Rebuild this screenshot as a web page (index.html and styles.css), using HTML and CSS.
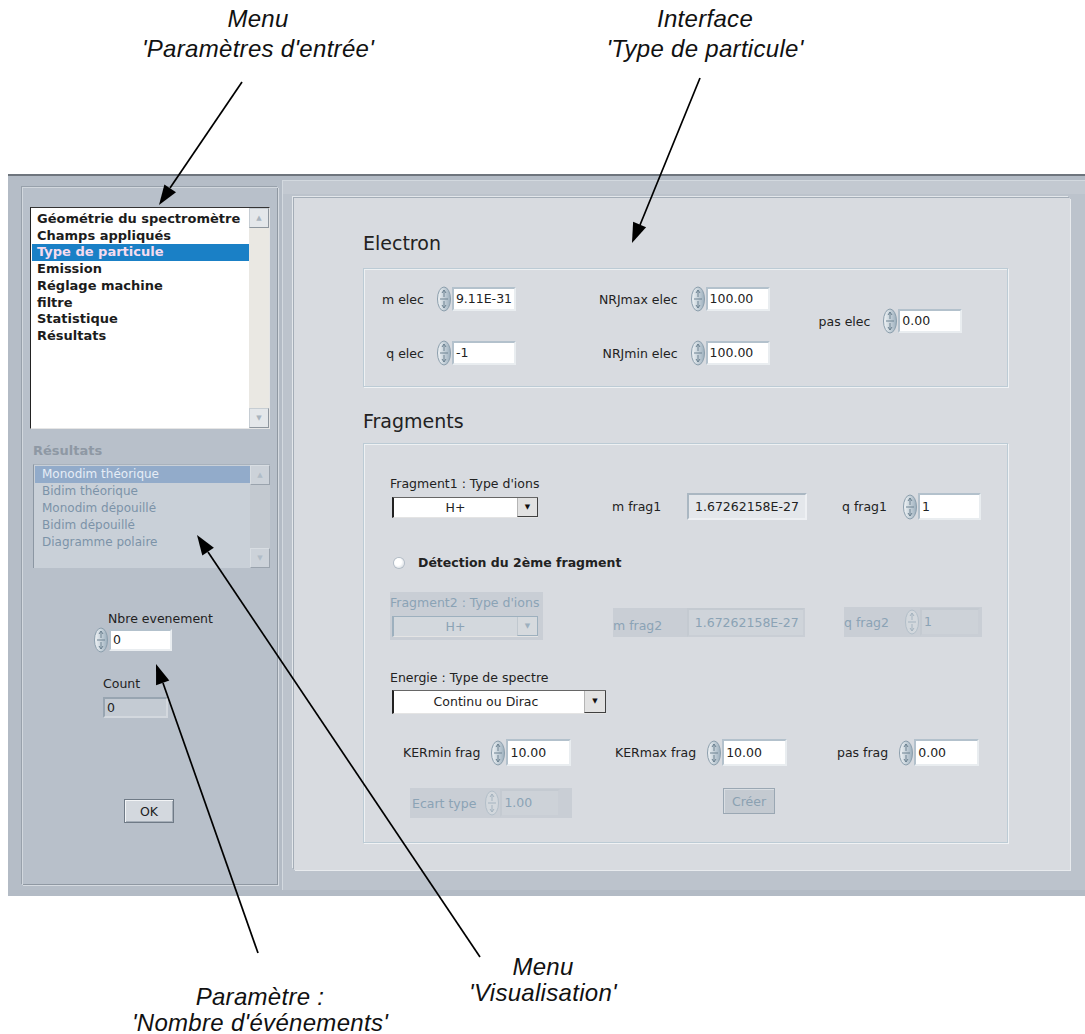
FILE: index.html
```html
<!DOCTYPE html>
<html lang="fr">
<head>
    <meta charset="UTF-8">
    <meta name="viewport" content="width=device-width, initial-scale=1.0">
    <title>Type de particule</title>
    <link rel="stylesheet" href="styles.css">
</head>
<body>
    <svg class="defs" width="0" height="0">
        <defs>
            <linearGradient id="spinFill" x1="0" y1="0" x2="1" y2="0">
                <stop offset="0" stop-color="#f2f5f7"/>
                <stop offset="1" stop-color="#9db0be"/>
            </linearGradient>
        </defs>
    </svg>

    <div class="notes notes-top">
        <p class="note note-menu">Menu<br>'Paramètres d'entrée'</p>
        <p class="note note-iface">Interface<br>'Type de particule'</p>
    </div>

    <div class="window">
        <div class="side">
            <div class="side-frame">
                <div class="listbox menu-list">
                    <ul>
                        <li>Géométrie du spectromètre</li>
                        <li>Champs appliqués</li>
                        <li class="sel">Type de particule</li>
                        <li>Emission</li>
                        <li>Réglage machine</li>
                        <li>filtre</li>
                        <li>Statistique</li>
                        <li>Résultats</li>
                    </ul>
                    <div class="scroll">
                        <span class="sb-btn">&#9650;</span>
                        <span class="sb-track"></span>
                        <span class="sb-btn">&#9660;</span>
                    </div>
                </div>

                <div class="res-title">Résultats</div>
                <div class="listbox res-list">
                    <ul>
                        <li class="sel">Monodim théorique</li>
                        <li>Bidim théorique</li>
                        <li>Monodim dépouillé</li>
                        <li>Bidim dépouillé</li>
                        <li>Diagramme polaire</li>
                    </ul>
                    <div class="scroll">
                        <span class="sb-btn">&#9650;</span>
                        <span class="sb-track"></span>
                        <span class="sb-btn">&#9660;</span>
                    </div>
                </div>

                <div class="nbre">
                    <div class="nbre-lbl">Nbre evenement</div>
                    <div class="ctl">
                        <svg class="spin" viewBox="0 0 16 26"><ellipse cx="8" cy="13" rx="6.5" ry="12" fill="url(#spinFill)" stroke="#8b9eac"/><path d="M8 4v7M6 7l2-3 2 3M4 13h8M8 15v7M6 19l2 3 2-3" fill="none" stroke="#6d8291"/></svg>
                        <span class="num num-nbre">0</span>
                    </div>
                </div>

                <div class="count">
                    <div class="count-lbl">Count</div>
                    <span class="ind ind-count">0</span>
                </div>

                <button class="btn btn-ok">OK</button>
            </div>
        </div>

        <div class="main">
            <div class="canvas">
                <h2>Electron</h2>
                <div class="group electron">
                    <div class="col col1">
                        <span class="lbl">m elec</span>
                        <svg class="spin" viewBox="0 0 16 26"><ellipse cx="8" cy="13" rx="6.5" ry="12" fill="url(#spinFill)" stroke="#8b9eac"/><path d="M8 4v7M6 7l2-3 2 3M4 13h8M8 15v7M6 19l2 3 2-3" fill="none" stroke="#6d8291"/></svg>
                        <span class="num">9.11E-31</span>
                        <span class="lbl">q elec</span>
                        <svg class="spin" viewBox="0 0 16 26"><ellipse cx="8" cy="13" rx="6.5" ry="12" fill="url(#spinFill)" stroke="#8b9eac"/><path d="M8 4v7M6 7l2-3 2 3M4 13h8M8 15v7M6 19l2 3 2-3" fill="none" stroke="#6d8291"/></svg>
                        <span class="num">-1</span>
                    </div>
                    <div class="col col2">
                        <span class="lbl">NRJmax elec</span>
                        <svg class="spin" viewBox="0 0 16 26"><ellipse cx="8" cy="13" rx="6.5" ry="12" fill="url(#spinFill)" stroke="#8b9eac"/><path d="M8 4v7M6 7l2-3 2 3M4 13h8M8 15v7M6 19l2 3 2-3" fill="none" stroke="#6d8291"/></svg>
                        <span class="num">100.00</span>
                        <span class="lbl">NRJmin elec</span>
                        <svg class="spin" viewBox="0 0 16 26"><ellipse cx="8" cy="13" rx="6.5" ry="12" fill="url(#spinFill)" stroke="#8b9eac"/><path d="M8 4v7M6 7l2-3 2 3M4 13h8M8 15v7M6 19l2 3 2-3" fill="none" stroke="#6d8291"/></svg>
                        <span class="num">100.00</span>
                    </div>
                    <div class="col col3">
                        <span class="lbl">pas elec</span>
                        <svg class="spin" viewBox="0 0 16 26"><ellipse cx="8" cy="13" rx="6.5" ry="12" fill="url(#spinFill)" stroke="#8b9eac"/><path d="M8 4v7M6 7l2-3 2 3M4 13h8M8 15v7M6 19l2 3 2-3" fill="none" stroke="#6d8291"/></svg>
                        <span class="num">0.00</span>
                    </div>
                </div>

                <h2>Fragments</h2>
                <div class="group frags">
                    <div class="row row-a">
                        <div class="cell c-ion">
                            <div class="cap">Fragment1 : Type d'ions</div>
                            <div class="ring ring-ion"><span class="ring-val">H+</span><span class="ring-btn">&#9660;</span></div>
                        </div>
                        <div class="cell c-mid">
                            <span class="lbl lbl-m">m frag1</span>
                            <span class="ind ind-m">1.67262158E-27</span>
                        </div>
                        <div class="cell c-right">
                            <span class="lbl lbl-q">q frag1</span>
                            <svg class="spin" viewBox="0 0 16 26"><ellipse cx="8" cy="13" rx="6.5" ry="12" fill="url(#spinFill)" stroke="#8b9eac"/><path d="M8 4v7M6 7l2-3 2 3M4 13h8M8 15v7M6 19l2 3 2-3" fill="none" stroke="#6d8291"/></svg>
                            <span class="num">1</span>
                        </div>
                    </div>

                    <div class="row row-b">
                        <span class="radio"></span>
                        <span class="radio-txt">Détection du 2ème fragment</span>
                    </div>

                    <div class="row row-c">
                        <div class="cell c-ion dis dis-ion">
                            <div class="cap">Fragment2 : Type d'ions</div>
                            <div class="ring ring-ion ring-dis"><span class="ring-val">H+</span><span class="ring-btn">&#9660;</span></div>
                        </div>
                        <div class="cell dis dis-m">
                            <span class="lbl lbl-m">m frag2</span>
                            <span class="ind ind-m ind-dis">1.67262158E-27</span>
                        </div>
                        <div class="cell dis dis-q">
                            <span class="lbl lbl-q">q frag2</span>
                            <svg class="spin spin-dis" viewBox="0 0 16 26"><ellipse cx="8" cy="13" rx="6.5" ry="12" fill="#d3d8dd" stroke="#b3bfc9"/><path d="M8 4v7M6 7l2-3 2 3M4 13h8M8 15v7M6 19l2 3 2-3" fill="none" stroke="#a5b4c0"/></svg>
                            <span class="num num-dis">1</span>
                        </div>
                    </div>

                    <div class="row row-d">
                        <div class="cap">Energie : Type de spectre</div>
                        <div class="ring ring-spec"><span class="ring-val">Continu ou Dirac</span><span class="ring-btn">&#9660;</span></div>
                    </div>

                    <div class="row row-e">
                        <div class="cell e1">
                            <span class="lbl">KERmin frag</span>
                            <svg class="spin" viewBox="0 0 16 26"><ellipse cx="8" cy="13" rx="6.5" ry="12" fill="url(#spinFill)" stroke="#8b9eac"/><path d="M8 4v7M6 7l2-3 2 3M4 13h8M8 15v7M6 19l2 3 2-3" fill="none" stroke="#6d8291"/></svg>
                            <span class="num">10.00</span>
                        </div>
                        <div class="cell e2">
                            <span class="lbl">KERmax frag</span>
                            <svg class="spin" viewBox="0 0 16 26"><ellipse cx="8" cy="13" rx="6.5" ry="12" fill="url(#spinFill)" stroke="#8b9eac"/><path d="M8 4v7M6 7l2-3 2 3M4 13h8M8 15v7M6 19l2 3 2-3" fill="none" stroke="#6d8291"/></svg>
                            <span class="num">10.00</span>
                        </div>
                        <div class="cell e3">
                            <span class="lbl">pas frag</span>
                            <svg class="spin" viewBox="0 0 16 26"><ellipse cx="8" cy="13" rx="6.5" ry="12" fill="url(#spinFill)" stroke="#8b9eac"/><path d="M8 4v7M6 7l2-3 2 3M4 13h8M8 15v7M6 19l2 3 2-3" fill="none" stroke="#6d8291"/></svg>
                            <span class="num">0.00</span>
                        </div>
                    </div>

                    <div class="row row-f">
                        <div class="cell dis dis-ecart">
                            <span class="lbl">Ecart type</span>
                            <svg class="spin spin-dis" viewBox="0 0 16 26"><ellipse cx="8" cy="13" rx="6.5" ry="12" fill="#d3d8dd" stroke="#b3bfc9"/><path d="M8 4v7M6 7l2-3 2 3M4 13h8M8 15v7M6 19l2 3 2-3" fill="none" stroke="#a5b4c0"/></svg>
                            <span class="num num-dis">1.00</span>
                        </div>
                        <button class="btn btn-creer">Créer</button>
                    </div>
                </div>
            </div>
        </div>
    </div>

    <div class="notes notes-bottom">
        <p class="note note-param">Paramètre :<br>'Nombre d'événements'</p>
        <p class="note note-visu">Menu<br>'Visualisation'</p>
    </div>

    <!-- annotation arrows drawn over the screenshot -->
    <svg class="arrows" width="1085" height="1034" viewBox="0 0 1085 1034">
        <g stroke="#000" stroke-width="1.7" fill="none">
            <line x1="242" y1="82" x2="170" y2="188"/>
            <line x1="700" y1="78" x2="640" y2="225"/>
            <line x1="258" y1="953" x2="163" y2="683"/>
            <line x1="480" y1="957" x2="208" y2="552"/>
        </g>
        <g fill="#000">
            <polygon points="159,205 176,192.3 164.4,184.5"/>
            <polygon points="632,243 646.1,227.2 633.1,221.8"/>
            <polygon points="156,664 169.3,680.6 156.1,685.2"/>
            <polygon points="197,535 213.9,547.7 202.3,555.5"/>
        </g>
    </svg>
</body>
</html>
```

FILE: styles.css
```css
body {
    margin: 0;
    width: 1085px;
    height: 1034px;
    position: relative;
    overflow: hidden;
    background: #fff;
    font-family: "DejaVu Sans", Verdana, sans-serif;
    font-size: 12.5px;
    color: #222;
}
.defs {
    position: absolute;
}

/* annotations */
.notes {
    display: flex;
    align-items: flex-start;
}
.notes-top {
    height: 174px;
    box-sizing: border-box;
    padding-top: 4px;
}
.note {
    margin: 0;
    font-family: "Liberation Sans", Arial, sans-serif;
    font-style: italic;
    font-size: 24px;
    letter-spacing: 0.3px;
    line-height: 30px;
    text-align: center;
    color: #111;
}
.note-menu {
    width: 320px;
    margin-left: 98px;
}
.note-iface {
    width: 320px;
    margin-left: 127px;
}
.notes-bottom .note {
    line-height: 26px;
}
.note-param {
    width: 320px;
    margin-left: 100px;
    margin-top: 88px;
}
.note-visu {
    width: 230px;
    margin-left: 8px;
    margin-top: 58px;
}
.arrows {
    position: absolute;
    top: 0;
    left: 0;
    pointer-events: none;
}

/* window */
.window {
    margin-left: 8px;
    height: 722px;
    box-sizing: border-box;
    background: #b3bbc5;
    border-top: 2px solid #6e757d;
    display: flex;
    gap: 2px;
    padding: 4px 0 6px 2px;
}
.side {
    width: 270px;
    box-sizing: border-box;
    padding: 7px 2px 5px 12px;
    background: #b5bdc7;
}
.side-frame {
    height: 100%;
    box-sizing: border-box;
    padding: 20px 8px 0 8px;
    background: #b8c0ca;
    box-shadow: inset 1px 1px 0 #d2d8de, inset -1px -1px 0 #8f98a2, 1px 1px 0 #d6dbe1, -1px -1px 0 #98a1ab;
}

/* list boxes */
.listbox {
    display: flex;
    box-sizing: border-box;
}
.listbox ul {
    flex: 1;
    list-style: none;
    margin: 0;
    padding: 3px 0 0 1px;
}
.menu-list {
    height: 222px;
    background: #fff;
    border-left: 1px solid #222;
    border-top: 1px solid #333;
    border-right: 1px solid #e6e6e6;
    border-bottom: 1px solid #e6e6e6;
}
.menu-list li {
    font-weight: bold;
    font-size: 13px;
    line-height: 16.7px;
    padding-left: 5px;
    color: #1c1c1c;
}
.menu-list li.sel {
    background: #1a80c6;
    color: #f6dcef;
}
.scroll {
    width: 20px;
    display: flex;
    flex-direction: column;
}
.sb-btn {
    height: 20px;
    box-sizing: border-box;
    background: #e4e7ea;
    border: 1px solid #c6cdd3;
    border-right-color: #8e969e;
    border-bottom-color: #8e969e;
    color: #a9b4be;
    font-size: 7px;
    line-height: 18px;
    text-align: center;
}
.sb-track {
    flex: 1;
    background: #eae8e3;
}
.res-title {
    margin: 14px 0 0 3px;
    font-weight: bold;
    font-size: 13px;
    line-height: 16px;
    color: #8e98a4;
}
.res-list {
    margin: 5px 0 0 3px;
    height: 104px;
    background: #c9d0d8;
    border-left: 1px solid #8c97a3;
    border-top: 1px solid #a9b2bc;
}
.res-list ul {
    padding-top: 1px;
}
.res-list li {
    font-size: 12px;
    line-height: 17px;
    padding-left: 7px;
    color: #7c93a8;
}
.res-list li.sel {
    background: #92abca;
    color: #e6edf6;
}
.res-list .sb-btn {
    background: #ccd2d9;
    color: #b0bcc7;
    border-color: #d8dde2 #9aa3ad #9aa3ad #d8dde2;
}
.res-list .sb-track {
    background: #c3c9d0;
}

/* controls */
.ctl {
    display: flex;
    align-items: center;
}
.spin {
    width: 16px;
    height: 26px;
    flex: none;
}
.num, .ind {
    display: block;
    box-sizing: border-box;
    height: 24px;
    line-height: 20px;
    padding-left: 2px;
    background: #fff;
    border: 2px solid;
    border-color: #b3c1cc #e9edf0 #e9edf0 #b3c1cc;
    color: #222;
}
.nbre {
    margin: 43px 0 0 63px;
}
.nbre-lbl {
    line-height: 16px;
    padding-left: 15px;
}
.num-nbre {
    width: 63px;
    height: 22px;
    line-height: 18px;
}
.count {
    margin: 23px 0 0 73px;
}
.count-lbl {
    line-height: 16px;
}
.ind-count {
    margin-top: 5px;
    width: 65px;
    height: 21px;
    line-height: 17px;
    background: #c4cbd3;
    border-color: #98a5b1 #d3d8de #d3d8de #98a5b1;
}
.btn {
    display: block;
    font-family: "DejaVu Sans", Verdana, sans-serif;
    font-size: 12.5px;
    padding: 0;
}
.btn-ok {
    margin: 81px 0 0 94px;
    width: 50px;
    height: 24px;
    background: #d3d8de;
    color: #222;
    border: 1px solid #6f7a86;
    box-shadow: inset 1px 1px 0 #f2f4f6, inset -1px -1px 0 #a5aeb8;
}

/* main panel */
.main {
    flex: 1;
    box-sizing: border-box;
    padding: 18px 15px 20px 12px;
    background: #bcc3cc;
    box-shadow: inset 1px 1px 0 #d3d9df, inset 0 14px 0 #c3c9d1;
}
.canvas {
    height: 100%;
    box-sizing: border-box;
    padding: 35px 0 0 69px;
    background: #d8dbe0;
    box-shadow: -1px -1px 0 #a4adb7, 1px 1px 0 #e8ebee, -2px -2px 0 #e3e7eb;
}
h2 {
    margin: 0;
    font-size: 19px;
    font-weight: normal;
    line-height: 20px;
    color: #222;
}
.group {
    width: 645px;
    box-sizing: border-box;
    border: 1px solid #bccbd5;
    box-shadow: inset 1px 1px 0 #eef1f3, 1px 1px 0 #f0f2f4;
}
.electron {
    margin-top: 15px;
    height: 119px;
    display: flex;
    align-items: flex-start;
    padding: 17px 0 0 18px;
}
.col {
    display: grid;
    grid-template-columns: auto 16px 64px;
    row-gap: 28px;
    align-items: center;
}
.col .lbl {
    justify-self: end;
    margin-right: 12px;
}
.col2 {
    margin-left: 83px;
}
.col3 {
    margin: 22px 0 0 49px;
}

/* fragments */
.group + h2 {
    margin-top: 24px;
}
h2 + .frags {
    margin-top: 12px;
}
.frags {
    height: 400px;
    padding: 32px 0 0 26px;
}
.row {
    display: flex;
    align-items: flex-end;
}
.cell {
    display: flex;
    align-items: center;
}
.cap {
    line-height: 15px;
}
.c-ion {
    display: block;
    width: 222px;
    flex: none;
    margin-bottom: 2px;
}
.ring {
    display: flex;
    height: 21px;
    box-sizing: border-box;
    margin: 6px 0 0 2px;
    background: #fff;
    border-top: 1px solid #666;
    border-left: 2px solid #222;
    border-bottom: 1px solid #e4e4e4;
}
.ring-ion {
    width: 146px;
}
.ring-val {
    flex: 1;
    text-align: center;
    line-height: 19px;
}
.ring-btn {
    width: 21px;
    box-sizing: border-box;
    background: #e2e2e2;
    border-left: 1px solid #b5b5b5;
    border-right: 1px solid #404040;
    border-bottom: 1px solid #404040;
    font-size: 7px;
    line-height: 18px;
    text-align: center;
    color: #111;
}
.c-mid {
    width: 230px;
}
.lbl-m {
    width: 75px;
}
.ind-m {
    width: 120px;
    height: 27px;
    line-height: 23px;
    padding-left: 6px;
    background: #e4e7eb;
    border-color: #aab7c2 #eef0f3 #eef0f3 #aab7c2;
}
.lbl-q {
    margin-right: 15px;
}
.c-right .num {
    width: 63px;
    height: 27px;
    line-height: 23px;
}
.row-b {
    margin-top: 36px;
    align-items: center;
}
.radio {
    width: 10px;
    height: 10px;
    margin: 0 14px 0 4px;
    border-radius: 50%;
    background: radial-gradient(circle at 40% 40%, #fff 40%, #c7ced6);
    box-shadow: 0 0 0 1px #b2bcc6;
}
.radio-txt {
    font-weight: bold;
    line-height: 14px;
}
.row-c {
    margin-top: 22px;
}
.dis {
    background: #c9ced5;
    color: #8ba3b5;
}
.dis-ion {
    width: 153px;
    height: 48px;
    margin: 0 69px 0 0;
    padding-top: 3px;
    box-sizing: border-box;
}
.ring-dis {
    background: #d3d8dd;
    border-top-color: #9db0be;
    border-left-color: #9db0be;
    color: #8ba3b5;
}
.ring-dis .ring-btn {
    background: #d6dade;
    border-color: #c0c8cf #9db0be #9db0be #c0c8cf;
    color: #9db0be;
}
.dis-m {
    width: 192px;
    height: 29px;
    margin: 0 39px 3px 1px;
}
.dis-m .lbl-m {
    padding-top: 5px;
}
.ind-dis {
    height: 29px;
    line-height: 25px;
    background: #cfd4da;
    border-color: #c4cad1 #c9ced5 #c9ced5 #c4cad1;
    color: #8ba3b5;
}
.dis-q {
    width: 138px;
    height: 30px;
    margin-bottom: 3px;
}
.num-dis {
    width: 60px;
    height: 28px;
    line-height: 24px;
    background: #cdd2d8;
    border-color: #c4cad1 #c9ced5 #c9ced5 #c4cad1;
    color: #8ba3b5;
}
.row-d {
    display: block;
    margin-top: 30px;
}
.ring-spec {
    width: 214px;
    height: 24px;
    margin: 5px 0 0 2px;
}
.ring-spec .ring-val {
    line-height: 22px;
    padding-right: 6px;
}
.ring-spec .ring-btn {
    width: 22px;
    line-height: 21px;
}
.row-e {
    margin-top: 25px;
}
.row-e .lbl {
    margin-right: 10px;
}
.row-e .num {
    width: 65px;
    height: 27px;
    line-height: 23px;
}
.e1 {
    width: 212px;
    margin-left: 13px;
}
.e2 {
    width: 222px;
}
.row-f {
    margin-top: 22px;
    align-items: flex-start;
}
.dis-ecart {
    width: 162px;
    height: 30px;
    margin-left: 20px;
    padding-left: 2px;
    box-sizing: border-box;
}
.dis-ecart .lbl {
    margin-right: 8px;
}
.btn-creer {
    margin-left: 151px;
    width: 52px;
    height: 26px;
    background: #c4cad1;
    color: #8ba1b2;
    border: 1px solid #9aa7b3;
    box-shadow: inset 1px 1px 0 #d9dee3;
}
```
